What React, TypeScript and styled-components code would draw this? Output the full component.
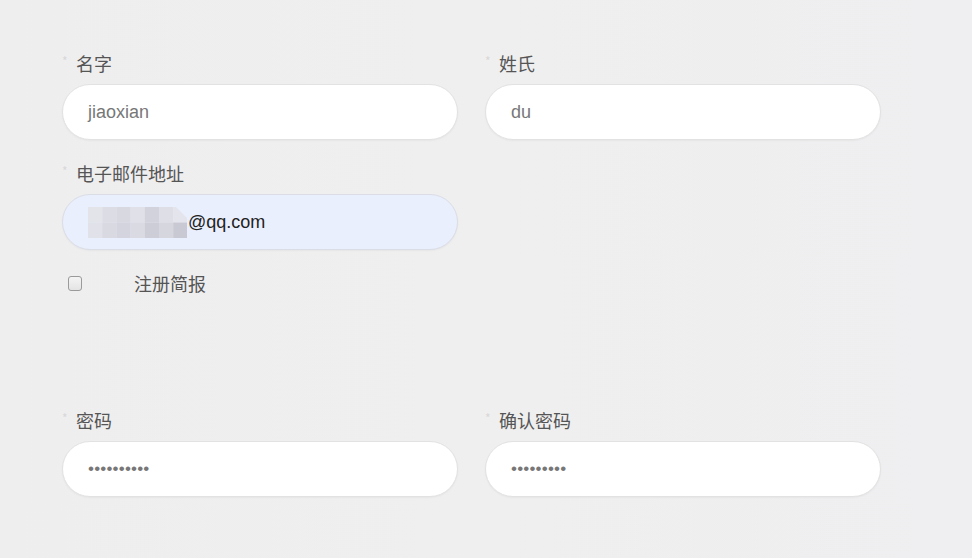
import React from "react";
import styled, { createGlobalStyle } from "styled-components";

const Global = createGlobalStyle`
  html, body { margin: 0; padding: 0; background: #efeeef; }
  body { font-family: "Liberation Sans", "Noto Sans CJK SC", sans-serif; }
`;

const Page = styled.div`
  width: 972px;
  height: 558px;
  box-sizing: border-box;
  padding: 51px 0 0 62px;
  background: linear-gradient(90deg, #efeeef 0%, #f0efef 50%, #efeef0 100%);
`;

const Row = styled.div<{ $mt?: number }>`
  display: grid;
  grid-template-columns: 396px 396px;
  column-gap: 27px;
  margin-top: ${(p) => p.$mt ?? 0}px;
`;

const Field = styled.div`
  display: flex;
  flex-direction: column;
`;

const Label = styled.label`
  display: flex;
  align-items: center;
  height: 23px;
  margin-bottom: 10px;
  font-family: "Noto Sans CJK SC", "Liberation Sans", sans-serif;
  font-size: 18px;
  color: #555;
`;

const Star = styled.span`
  width: 14px;
  font-size: 12px;
  color: #d8d8d8;
  align-self: flex-start;
  margin-top: 1px;
`;

const Input = styled.div<{ $autofill?: boolean }>`
  box-sizing: border-box;
  height: 56px;
  border-radius: 28px;
  border: 1px solid ${(p) => (p.$autofill ? "#dadde6" : "#e2e2e2")};
  background: ${(p) => (p.$autofill ? "#e9effc" : "#ffffff")};
  box-shadow: 0 1px 2px rgba(0, 0, 0, 0.04);
  display: flex;
  align-items: center;
  padding-left: 25px;
  font-size: 18px;
  color: #777;
`;

const Dots = styled.span`
  font-size: 17px;
  letter-spacing: 0.2px;
  color: #777;
  font-family: "Liberation Sans", sans-serif;
`;

const Email = styled.span`
  color: #222;
  font-size: 18px;
`;

const Mosaic = styled.svg`
  display: block;
  margin-right: 1px;
`;

const CheckRow = styled.div`
  display: flex;
  align-items: center;
  margin-top: 24px;
  height: 18px;
`;

const Box = styled.span`
  box-sizing: border-box;
  width: 14px;
  height: 15px;
  margin-left: 6px;
  border: 1.5px solid #9a9a9a;
  border-radius: 3px;
  background: linear-gradient(#f4f4f4, #e4e4e4);
`;

const CheckText = styled.span`
  margin-left: 52px;
  font-family: "Noto Sans CJK SC", "Liberation Sans", sans-serif;
  font-size: 18px;
  color: #555;
`;

const tiles = [
  ["#e3e3ea", "#dcdce4", "#d8d8e0", "#e0e0e8", "#d2d2dc", "#dedee6", "#e4e4ec"],
  ["#e1e1e9", "#d9d9e1", "#d4d4de", "#dadae2", "#cdcdd7", "#d6d6df", "#c9c9d3"],
];

function Blur() {
  return (
    <Mosaic width="99" height="31" viewBox="0 0 99 31">
      <defs>
        <clipPath id="mc">
          <path d="M0 0 H88 L99 11 V31 H0 Z" />
        </clipPath>
      </defs>
      <g clipPath="url(#mc)">
        {tiles.map((row, r) =>
          row.map((c, i) => (
            <rect key={`${r}-${i}`} x={i * 14.2} y={r * 15.5} width="14.3" height="15.6" fill={c} />
          ))
        )}
      </g>
    </Mosaic>
  );
}

export default function App() {
  return (
    <>
      <Global />
      <Page>
        <Row>
          <Field>
            <Label><Star>*</Star>名字</Label>
            <Input>jiaoxian</Input>
          </Field>
          <Field>
            <Label><Star>*</Star>姓氏</Label>
            <Input>du</Input>
          </Field>
        </Row>
        <Row $mt={21}>
          <Field>
            <Label><Star>*</Star>电子邮件地址</Label>
            <Input $autofill>
              <Blur />
              <Email>@qq.com</Email>
            </Input>
          </Field>
        </Row>
        <CheckRow>
          <Box />
          <CheckText>注册简报</CheckText>
        </CheckRow>
        <Row $mt={116}>
          <Field>
            <Label><Star>*</Star>密码</Label>
            <Input><Dots>••••••••••</Dots></Input>
          </Field>
          <Field>
            <Label><Star>*</Star>确认密码</Label>
            <Input><Dots>•••••••••</Dots></Input>
          </Field>
        </Row>
      </Page>
    </>
  );
}
